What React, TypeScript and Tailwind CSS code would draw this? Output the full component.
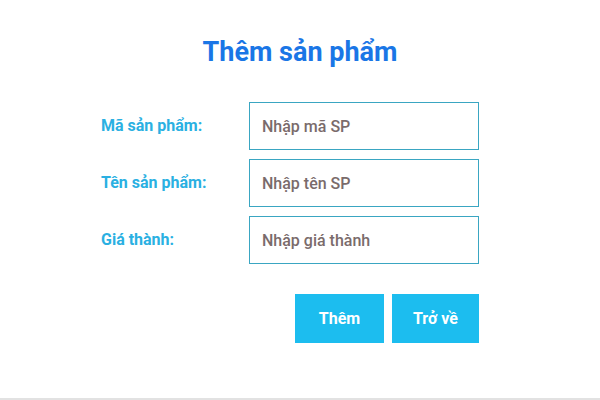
import { useState } from "react";

const fields = [
  { label: "Mã sản phẩm:", placeholder: "Nhập mã SP" },
  { label: "Tên sản phẩm:", placeholder: "Nhập tên SP" },
  { label: "Giá thành:", placeholder: "Nhập giá thành" },
];

export default function App() {
  const [values, setValues] = useState<string[]>(["", "", ""]);

  return (
    <div className="h-[400px] w-[600px] bg-white flex flex-col font-['Roboto',sans-serif]">
      <div className="flex-1 flex flex-col">
        <h1 className="mt-[34px] text-center text-[27px] font-bold text-[#1a76e6] leading-[36px]">
          Thêm sản phẩm
        </h1>
        <div className="mt-[32px] ml-[101px] flex flex-col gap-[9px]">
          {fields.map((f, i) => (
            <div key={f.label} className="flex items-center">
              <label className="w-[148px] text-[16px] font-bold text-[#2ab0e2]">
                {f.label}
              </label>
              <input
                value={values[i]}
                onChange={(e) => {
                  const next = [...values];
                  next[i] = e.target.value;
                  setValues(next);
                }}
                placeholder={f.placeholder}
                className="h-[48px] w-[230px] border border-[#3aa6c2] px-3 text-[16px] font-medium text-[#6f6565] placeholder:text-[#7a6b6b] outline-none"
              />
            </div>
          ))}
        </div>
        <div className="mt-[30px] ml-[295px] flex gap-2">
          <button className="h-[49px] w-[89px] bg-[#1cbdef] text-[16px] font-bold text-white">
            Thêm
          </button>
          <button className="h-[49px] w-[87px] bg-[#1cbdef] text-[16px] font-bold text-white">
            Trở về
          </button>
        </div>
      </div>
      <div className="h-[2px] bg-[#e2e2e2]" />
    </div>
  );
}
